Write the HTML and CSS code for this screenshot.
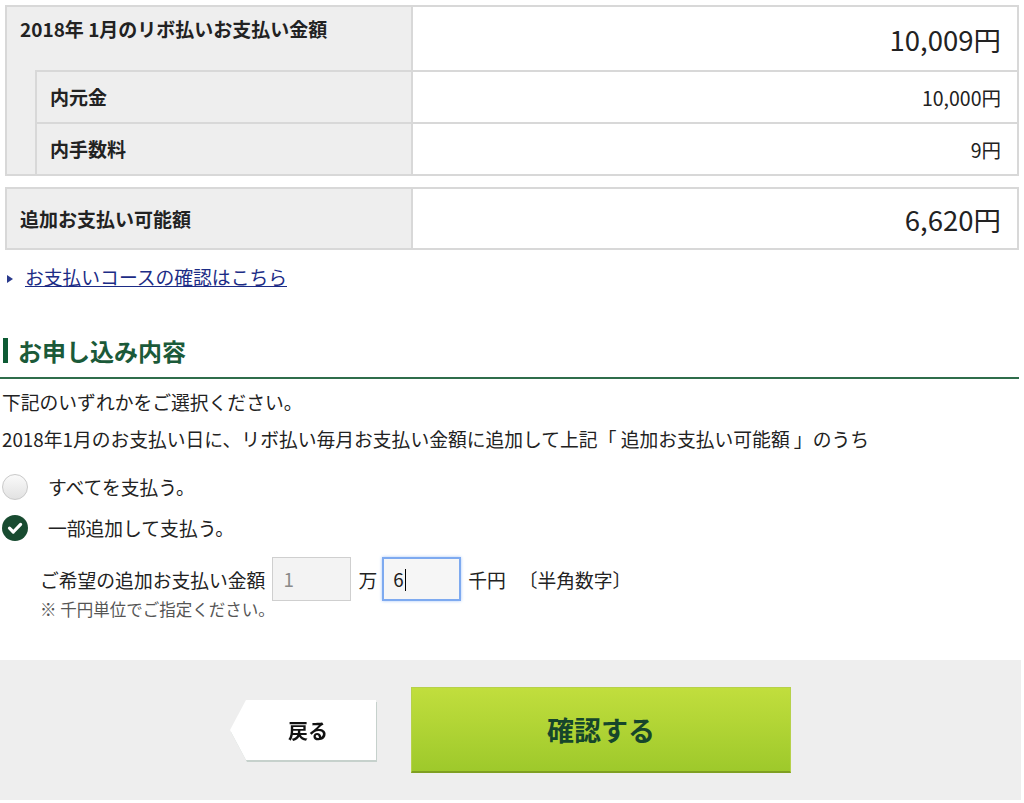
FILE: index.html
```html
<!doctype html>
<html lang="ja">
<head>
    <meta charset="UTF-8">
    <meta name="viewport" content="width=device-width, initial-scale=1.0">
    <title>リボ払い 追加お支払い</title>
    <link rel="stylesheet" href="styles.css">
</head>
<body>
    <div class="main">
        <table class="amount">
            <colgroup>
                <col class="c-indent">
                <col class="c-label">
                <col>
            </colgroup>
            <tr class="row-top">
                <th colspan="2" class="top">2018年 1月のリボ払いお支払い金額</th>
                <td class="big">10,009円</td>
            </tr>
            <tr class="row-sub">
                <th rowspan="2" class="indent"></th>
                <th>内元金</th>
                <td>10,000円</td>
            </tr>
            <tr class="row-sub">
                <th>内手数料</th>
                <td>9円</td>
            </tr>
        </table>

        <table class="amount extra">
            <colgroup>
                <col class="c-wide">
                <col>
            </colgroup>
            <tr>
                <th>追加お支払い可能額</th>
                <td class="big">6,620円</td>
            </tr>
        </table>

        <p class="more"><a href="#">お支払いコースの確認はこちら</a></p>

        <h2 class="sec-title"><span>お申し込み内容</span></h2>

        <p class="txt">下記のいずれかをご選択ください。</p>
        <p class="txt">2018年1月のお支払い日に、リボ払い毎月お支払い金額に追加して上記「 追加お支払い可能額 」のうち</p>

        <ul class="choice">
            <li><span class="radio"></span>すべてを支払う。</li>
            <li>
                <span class="radio checked">
                    <svg width="26" height="26" viewBox="0 0 26 26">
                        <path d="M7.5 13.2 L11.3 17 L18.6 9.4" fill="none" stroke="#fff" stroke-width="3.2" stroke-linecap="round" stroke-linejoin="round"/>
                    </svg>
                </span>一部追加して支払う。
            </li>
        </ul>

        <div class="part">
            <div class="part-row">
                <span>ご希望の追加お支払い金額</span>
                <span class="field disabled">1</span>
                <span>万</span>
                <span class="field focus">6<i class="caret"></i></span>
                <span>千円</span>
                <span class="hint">〔半角数字〕</span>
            </div>
            <p class="note">※ 千円単位でご指定ください。</p>
        </div>
    </div>

    <div class="actions">
        <div class="back-wrap"><a href="#" class="btn-back">戻る</a></div>
        <a href="#" class="btn-submit">確認する</a>
    </div>
</body>
</html>
```

FILE: styles.css
```css
*{
    padding: 0;
    margin: 0;
    box-sizing: border-box;
}
body{
    width: 1024px;
    font-family: "Noto Sans CJK JP", "Noto Sans", sans-serif;
    font-size: 18.8px;
    color: #222;
    background: #fff;
}
.main{
    padding: 5px 5px 0 0;
}

/* 金額テーブル */
.amount{
    width: 1014px;
    margin-left: 5px;
    border-collapse: collapse;
    table-layout: fixed;
}
.amount th,
.amount td{
    border: 2px solid #d8d8d8;
}
.amount th{
    background: #eee;
    text-align: left;
    font-weight: bold;
    font-size: 19px;
    line-height: 24px;
    padding: 0 13px;
    vertical-align: middle;
}
.amount td{
    text-align: right;
    padding: 0 16px;
    font-size: 19.5px;
    vertical-align: middle;
}
.amount td.big{
    font-size: 27.5px;
}
.c-indent{ width: 30px; }
.c-label{ width: 376px; }
.c-wide{ width: 406px; }

.row-top{ height: 65px; }
.row-top th.top{
    vertical-align: top;
    padding-top: 10px;
    border-bottom: none;
}
.row-sub{ height: 52px; }
.amount th.indent{
    border-top: none;
    padding: 0;
}
.extra{
    margin-top: 11px;
}
.extra tr{ height: 61px; }

/* リンク */
.more{
    margin: 15px 0 0 7px;
    line-height: 24px;
}
.more:before{
    content: "";
    display: inline-block;
    border-left: 6px solid #2a3a8c;
    border-top: 4px solid transparent;
    border-bottom: 4px solid transparent;
    margin-right: 12px;
    vertical-align: 2px;
}
.more a{
    color: #1c2c86;
    text-decoration: underline;
}

/* 見出し */
.sec-title{
    margin-top: 49px;
    padding: 0 0 14px 3px;
    border-bottom: 2px solid #2f6d4b;
    font-size: 24px;
    color: #1b5a39;
}
.sec-title span{
    display: block;
    border-left: 5px solid #0d5a34;
    padding-left: 10px;
    line-height: 25px;
}

.txt{
    margin: 10px 0 0 2px;
    line-height: 26px;
}
.txt + .txt{
    margin-top: 11px;
}

/* ラジオ */
.choice{
    list-style: none;
    margin-top: 14px;
}
.choice li{
    height: 41px;
    display: flex;
    align-items: center;
}
.radio{
    width: 26px;
    height: 26px;
    margin: 0 20px 0 2px;
    border-radius: 50%;
    border: 1px solid #c9c9c9;
    background: linear-gradient(#fafafa, #e2e2e2);
}
.radio.checked{
    border: none;
    background: #184b30;
}
.radio svg{
    display: block;
}

/* 一部追加 */
.part{
    margin: 9px 0 0 40px;
}
.part-row{
    display: flex;
    align-items: center;
    gap: 7px;
    height: 44px;
}
.field{
    width: 79px;
    height: 44px;
    border: 1px solid #cfcfcf;
    background: #f3f3f3;
    padding-left: 10px;
    line-height: 42px;
}
.field.disabled{
    color: #8a8a8a;
}
.field.focus{
    margin-left: -2px;
    border: 2px solid #7eaaf0;
    box-shadow: 0 0 3px #a9c8f8;
    background: #f6f6f6;
    padding-left: 9px;
    line-height: 40px;
}
.caret{
    display: inline-block;
    width: 1px;
    height: 22px;
    background: #000;
    vertical-align: -4px;
    margin-left: 1px;
}
.hint{
    margin-left: 6px;
}
.note{
    font-size: 16.5px;
    color: #555;
    line-height: 16px;
}

/* ボタン */
.actions{
    margin-top: 43px;
    height: 140px;
    width: 1021px;
    background: #eee;
    display: flex;
    justify-content: center;
    align-items: center;
    gap: 35px;
}
.back-wrap{
    filter: drop-shadow(1px 2px 0 #c6d1cc);
}
.btn-back{
    display: flex;
    justify-content: center;
    align-items: center;
    width: 146px;
    height: 60px;
    background: #fff;
    clip-path: polygon(16px 0, 100% 0, 100% 100%, 16px 100%, 0 50%);
    color: #111;
    font-size: 20px;
    font-weight: bold;
    text-decoration: none;
    padding-left: 10px;
}
.btn-submit{
    display: flex;
    justify-content: center;
    align-items: center;
    width: 380px;
    height: 86px;
    background: linear-gradient(#c1de3d, #9ec92b);
    border: 1px solid #b6d14a;
    border-bottom: 2px solid #7f9f22;
    color: #16462b;
    font-size: 27px;
    font-weight: bold;
    text-decoration: none;
}
```
